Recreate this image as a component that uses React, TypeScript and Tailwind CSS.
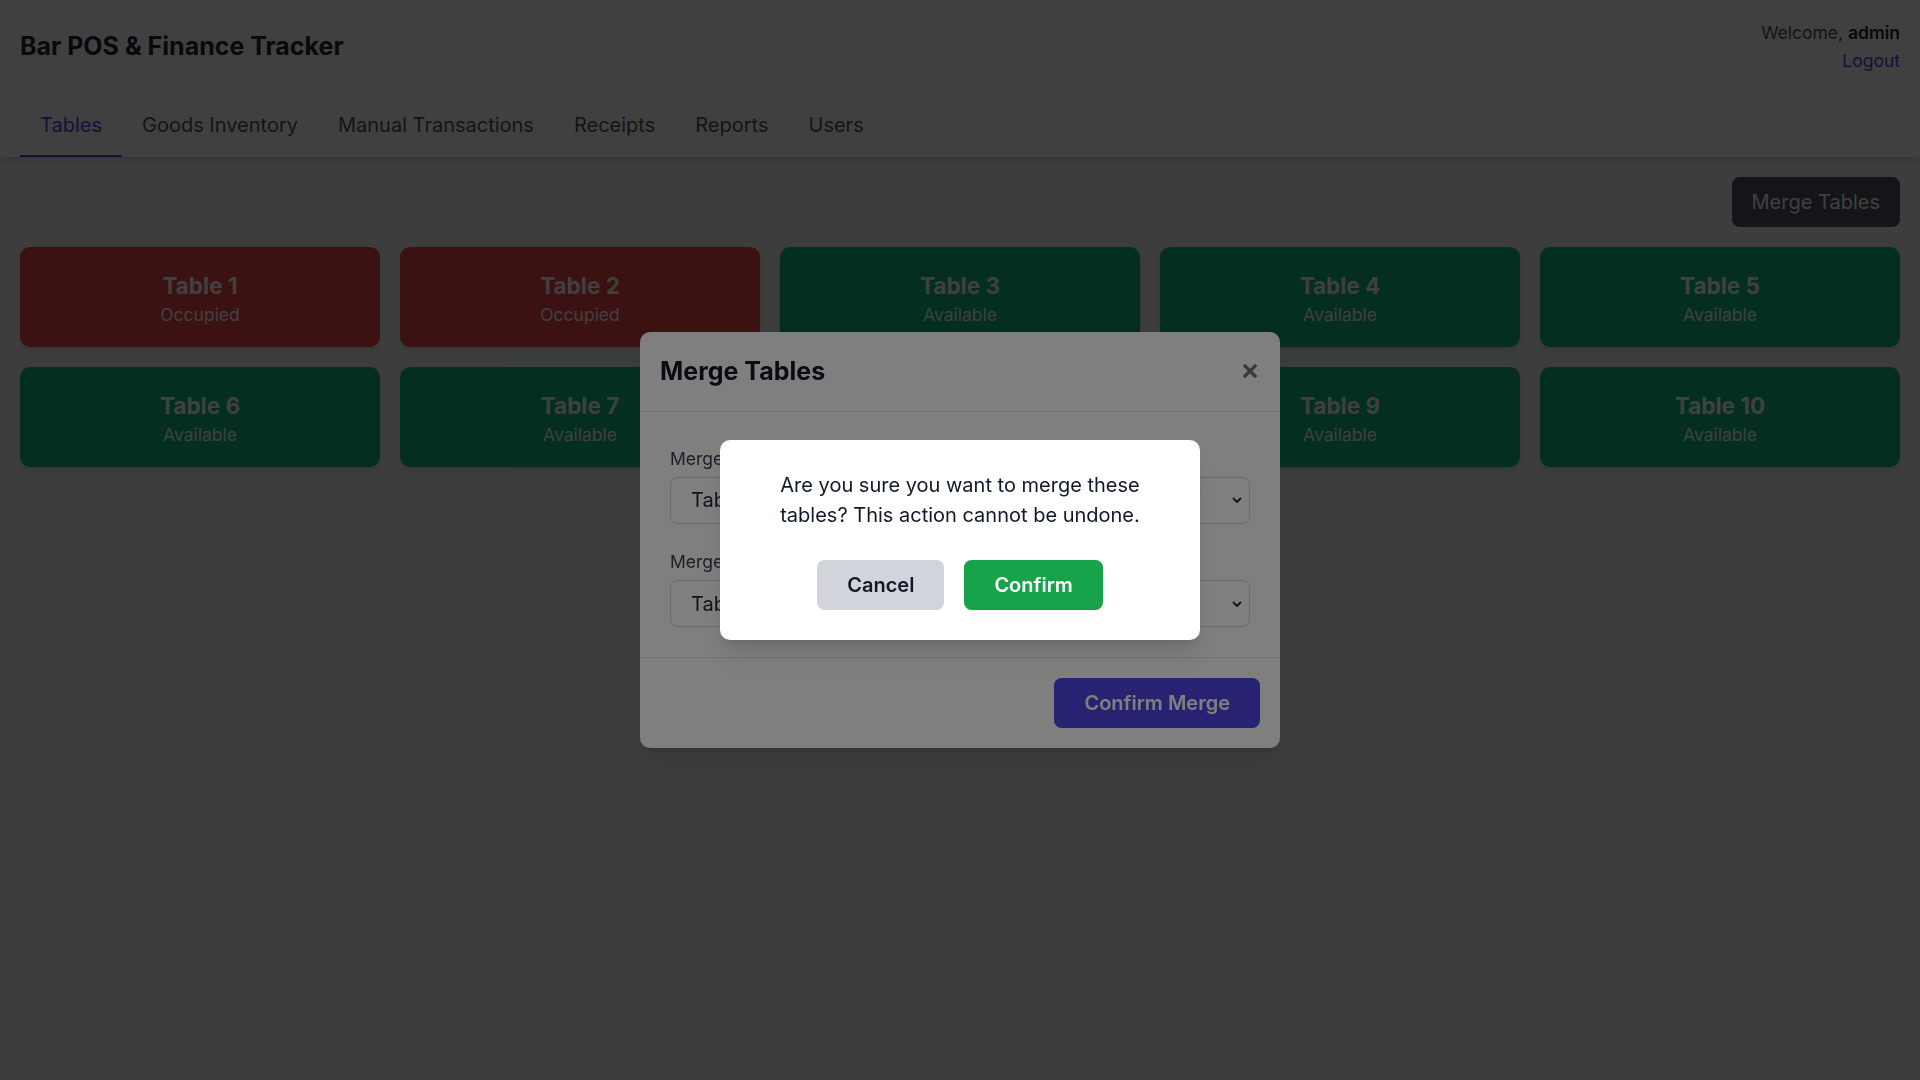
import { useState } from 'react';

type TableItem = { id: number; status: 'Occupied' | 'Available' };

const tables: TableItem[] = [
  { id: 1, status: 'Occupied' },
  { id: 2, status: 'Occupied' },
  { id: 3, status: 'Available' },
  { id: 4, status: 'Available' },
  { id: 5, status: 'Available' },
  { id: 6, status: 'Available' },
  { id: 7, status: 'Available' },
  { id: 8, status: 'Available' },
  { id: 9, status: 'Available' },
  { id: 10, status: 'Available' },
];

const tabs = ['Tables', 'Goods Inventory', 'Manual Transactions', 'Receipts', 'Reports', 'Users'];

const Chevron = () => (
  <svg
    className="pointer-events-none absolute right-[7px] top-1/2 -translate-y-1/2 text-[#1f2937]"
    width="12"
    height="12"
    viewBox="0 0 12 12"
    fill="none"
    stroke="currentColor"
    strokeWidth="1.8"
    strokeLinecap="round"
    strokeLinejoin="round"
  >
    <path d="M2.5 4.5 6 8l3.5-3.5" />
  </svg>
);

const App = () => {
  const [activeTab, setActiveTab] = useState('Tables');
  const [from, setFrom] = useState('1');
  const [into, setInto] = useState('2');

  return (
    <div className="min-h-screen bg-[#f3f4f6] font-['Inter',sans-serif] text-[#1f2937]">
      {/* Header */}
      <header className="bg-white shadow-md">
        <div className="flex items-center justify-between px-5 pt-5">
          <h1 className="text-[25px] font-bold leading-[35px] text-[#1f2937]">Bar POS &amp; Finance Tracker</h1>
          <div className="flex flex-col items-end text-[17.5px] leading-[25px]">
            <span className="text-[#4b5563]">
              Welcome, <span className="font-semibold text-[#1f2937]">admin</span>
            </span>
            <button className="mt-[3px] text-[#4f46e5]">Logout</button>
          </div>
        </div>
        <nav className="mt-[20px] flex px-5">
          {tabs.map((tab) => (
            <button
              key={tab}
              onClick={() => setActiveTab(tab)}
              className={
                tab === activeTab
                  ? 'border-b-[2.5px] border-[#4f46e5] px-5 pb-[15px] pt-[17px] text-[20px] leading-[30px] text-[#4f46e5]'
                  : 'border-b-[2.5px] border-transparent px-5 pb-[15px] pt-[17px] text-[20px] leading-[30px] text-[#4b5563]'
              }
            >
              {tab}
            </button>
          ))}
        </nav>
      </header>

      {/* Main */}
      <main className="p-5">
        <div className="mb-5 flex justify-end">
          <button className="rounded-[7.5px] bg-[#4b5563] px-5 py-[10px] text-[20px] leading-[30px] text-white">
            Merge Tables
          </button>
        </div>
        <div className="grid grid-cols-5 gap-5">
          {tables.map((t) => (
            <div
              key={t.id}
              className={
                t.status === 'Occupied'
                  ? 'rounded-[10px] bg-[#ef4444] p-5 text-center text-white shadow-md'
                  : 'rounded-[10px] bg-[#10b981] p-5 text-center text-white shadow-md'
              }
            >
              <div className="pt-[2px] text-[22.5px] font-bold leading-[33px]">Table {t.id}</div>
              <div className="text-[17.5px] leading-[25px]">{t.status}</div>
            </div>
          ))}
        </div>
      </main>

      {/* Merge modal */}
      <div className="fixed inset-0 flex items-center justify-center bg-black/50">
        <div className="w-[640px] rounded-[10px] bg-white shadow-xl">
          <div className="flex h-[80px] items-center justify-between border-b-[1.25px] border-[#e5e7eb] px-5">
            <h2 className="text-[25px] font-bold leading-[35px] text-[#111827]">Merge Tables</h2>
            <button className="mr-[2px] text-[#6b7280]">
              <svg width="16" height="16" viewBox="0 0 16 16" fill="none" stroke="currentColor" strokeWidth="3.2" strokeLinecap="square">
                <path d="M3 3l10 10M13 3 3 13" />
              </svg>
            </button>
          </div>
          <div className="px-[30px] pb-[30px] pt-[34px]">
            <label className="mb-[6px] block text-[17.5px] leading-[25px] text-[#374151]">Merge from table:</label>
            <div className="relative mb-[25.5px]">
              <select
                value={from}
                onChange={(e) => setFrom(e.target.value)}
                className="h-[47px] w-full appearance-none rounded-[7.5px] border-[1.25px] border-[#d1d5db] bg-white px-5 text-[20px] text-[#1f2937]"
              >
                {tables.map((t) => (
                  <option key={t.id} value={String(t.id)}>
                    Table {t.id}
                  </option>
                ))}
              </select>
              <Chevron />
            </div>
            <label className="mb-[6px] block text-[17.5px] leading-[25px] text-[#374151]">Merge into table:</label>
            <div className="relative">
              <select
                value={into}
                onChange={(e) => setInto(e.target.value)}
                className="h-[47px] w-full appearance-none rounded-[7.5px] border-[1.25px] border-[#d1d5db] bg-white px-5 text-[20px] text-[#1f2937]"
              >
                {tables.map((t) => (
                  <option key={t.id} value={String(t.id)}>
                    Table {t.id}
                  </option>
                ))}
              </select>
              <Chevron />
            </div>
          </div>
          <div className="flex justify-end border-t-[1.25px] border-[#e5e7eb] p-5">
            <button className="rounded-[7.5px] bg-[#4f46e5] px-[30px] py-[10px] text-[20px] font-semibold leading-[30px] text-white">
              Confirm Merge
            </button>
          </div>
        </div>
      </div>

      {/* Confirm dialog */}
      <div className="fixed inset-0 flex items-center justify-center bg-black/50">
        <div className="w-[480px] rounded-[10px] bg-white p-[30px] text-center shadow-xl">
          <p className="mb-[30px] px-[10px] text-[20px] leading-[30px] text-[#111827]">
            Are you sure you want to merge these tables? This action cannot be undone.
          </p>
          <div className="flex justify-center gap-5">
            <button className="rounded-[7.5px] bg-[#d1d5db] px-[30px] py-[10px] text-[20px] font-semibold leading-[30px] text-[#111827]">
              Cancel
            </button>
            <button className="rounded-[7.5px] bg-[#16a34a] px-[30px] py-[10px] text-[20px] font-semibold leading-[30px] text-white">
              Confirm
            </button>
          </div>
        </div>
      </div>
    </div>
  );
};

export default App;
